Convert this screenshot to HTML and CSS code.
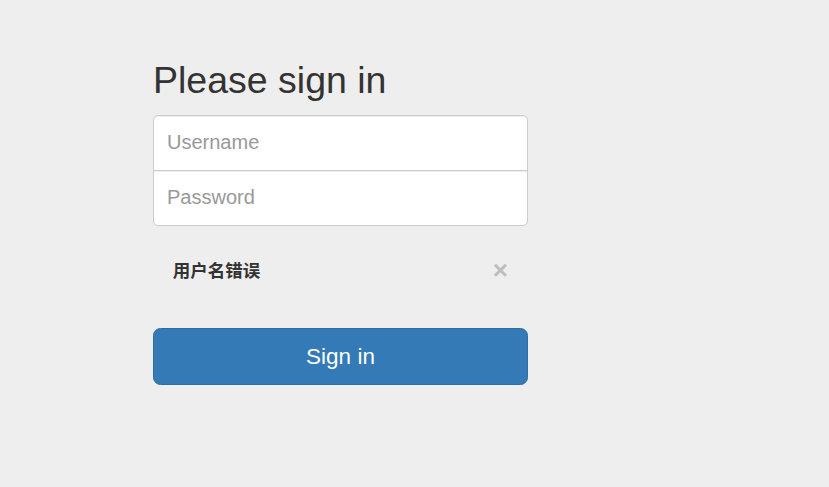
FILE: index.html
```html
<!DOCTYPE html>
<html>
<head>
<meta charset="utf-8">
<title>Sign in</title>
<link rel="stylesheet" href="styles.css">
</head>
<body>
<form class="form-signin">
  <h2 class="form-signin-heading">Please sign in</h2>
  <input type="text" class="form-control input-user" placeholder="Username">
  <input type="password" class="form-control input-pass" placeholder="Password">
  <div class="alert">
    <strong class="alert-text">用户名错误</strong>
    <button type="button" class="close">×</button>
  </div>
  <button type="button" class="btn-primary">Sign in</button>
</form>
</body>
</html>
```
FILE: styles.css
```css
html, body {
  margin: 0;
  padding: 0;
}
body {
  background: #eee;
  color: #333;
  font-family: "Liberation Sans", Arial, "Noto Sans CJK SC", sans-serif;
  font-size: 17.5px;
  line-height: 1.42857;
}
.form-signin {
  width: 375px;
  margin: 0 0 0 153px;
  padding-top: 60px;
}
.form-signin-heading {
  margin: 0 0 13.5px 0;
  font-size: 37.5px;
  font-weight: 500;
  line-height: 1.1;
  color: #333;
}
.form-control {
  display: block;
  box-sizing: border-box;
  width: 100%;
  height: 56px;
  margin: 0;
  padding: 12.5px 13px;
  font-family: "Liberation Sans", Arial, sans-serif;
  font-size: 20px;
  line-height: 1.42857;
  color: #555;
  background: #fff;
  border: 1.25px solid #ccc;
  border-radius: 5px;
  box-shadow: inset 0 1px 1px rgba(0,0,0,.075);
  outline: none;
}
.form-control::placeholder {
  color: #999;
}
.input-user {
  margin-bottom: -1px;
  border-bottom-left-radius: 0;
  border-bottom-right-radius: 0;
}
.input-pass {
  margin-bottom: 12.5px;
  border-top-left-radius: 0;
  border-top-right-radius: 0;
}
.alert {
  display: flex;
  align-items: center;
  justify-content: space-between;
  padding: 18px 19px 19.5px 18.75px;
  border: 1.25px solid transparent;
  margin-bottom: 25px;
  height: 25px;
}
.alert-text {
  font-family: "Noto Sans CJK SC", "Liberation Sans", sans-serif;
  font-weight: 700;
  font-size: 17.5px;
  line-height: 25px;
  color: #333;
}
.close {
  background: none;
  border: 0;
  padding: 0;
  font-family: "Liberation Sans", Arial, sans-serif;
  font-size: 26px;
  font-weight: 700;
  line-height: 1;
  color: #000;
  opacity: .2;
  cursor: pointer;
}
.btn-primary {
  display: block;
  box-sizing: border-box;
  width: 100%;
  height: 57.5px;
  padding: 12.5px 20px;
  font-family: "Liberation Sans", Arial, sans-serif;
  font-size: 22.5px;
  line-height: 1.33333;
  color: #fff;
  background: #337ab7;
  border: 1.25px solid #2e6da4;
  border-radius: 7.5px;
  cursor: pointer;
}
```
